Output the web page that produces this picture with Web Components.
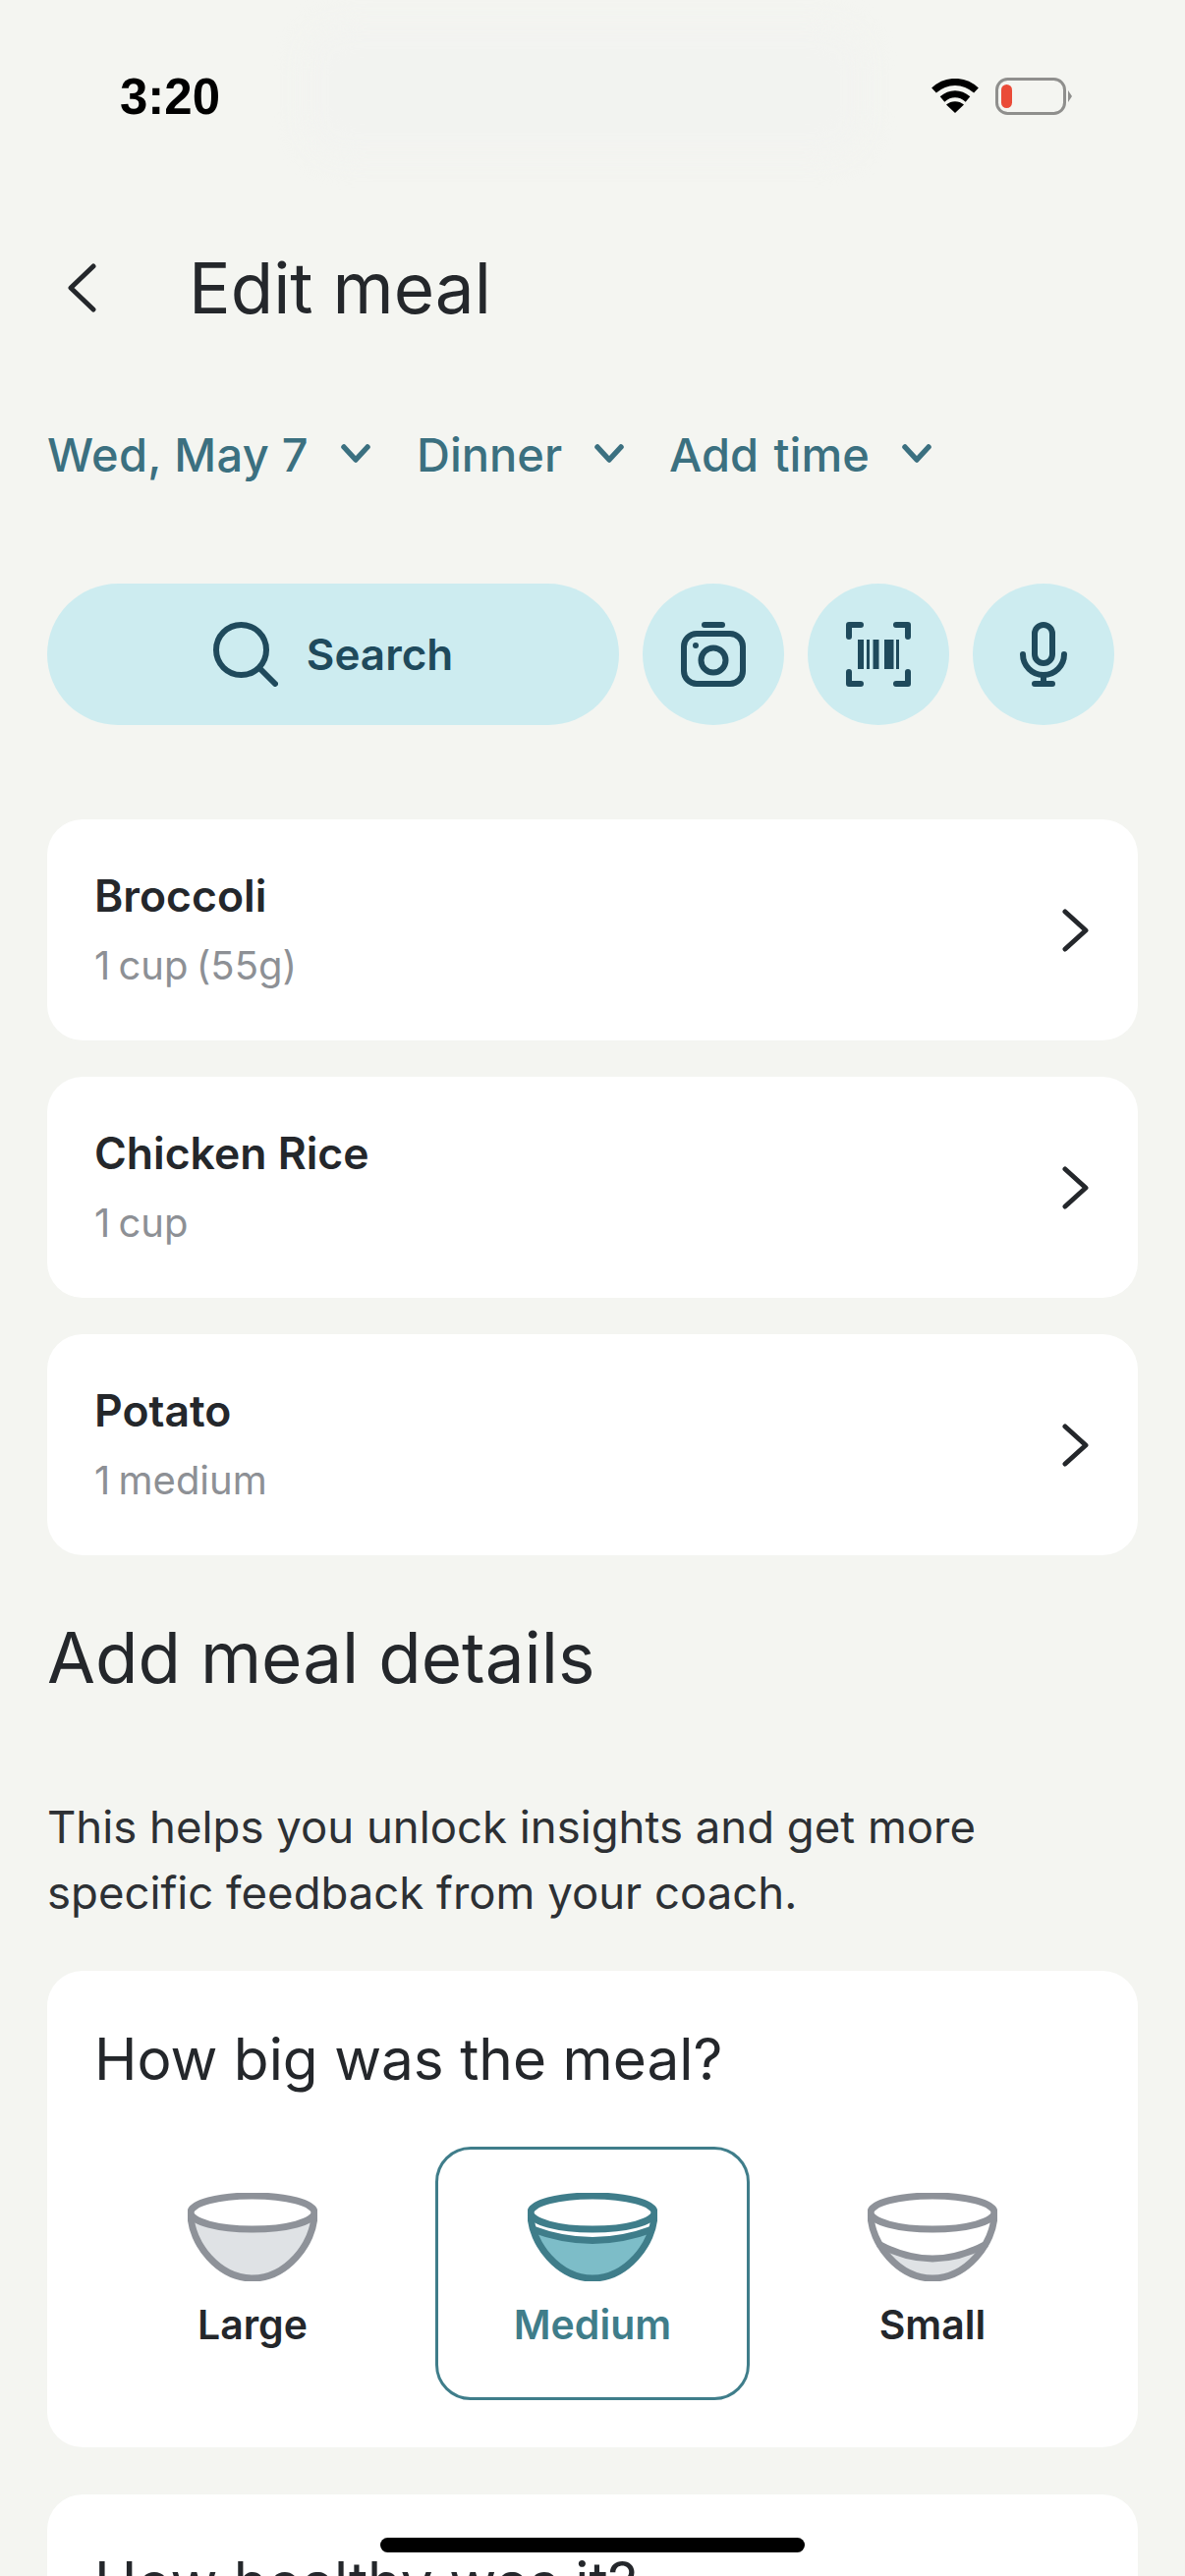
<!DOCTYPE html>
<html>
<head>
<meta charset="utf-8">
<title>Edit meal</title>
<style>
    html, body { margin: 0; height: 2622px; overflow: hidden; background: #f4f5f1; }
    body { font-family: 'Inter', 'Lato', sans-serif; color: #24272b; }
</style>
</head>
<body>
<meal-screen>
    <status-bar time="3:20"></status-bar>
    <nav-header>Edit meal</nav-header>
    <filter-row>
        <filter-chip style="width:376px;letter-spacing:.3px">Wed, May 7</filter-chip>
        <filter-chip style="width:257px">Dinner</filter-chip>
        <filter-chip style="word-spacing:3px">Add time</filter-chip>
    </filter-row>
    <action-row>
        <search-pill>Search</search-pill>
        <icon-circle icon="camera"></icon-circle>
        <icon-circle icon="barcode"></icon-circle>
        <icon-circle icon="mic"></icon-circle>
    </action-row>
    <food-list>
        <food-row name="Broccoli" amount="1 cup (55g)"></food-row>
        <food-row name="Chicken Rice" amount="1 cup"></food-row>
        <food-row name="Potato" amount="1 medium"></food-row>
    </food-list>
    <details-intro heading="Add meal details">This helps you unlock insights and get more specific feedback from your coach.</details-intro>
    <question-card heading="How big was the meal?">
        <size-option label="Large" level="large"></size-option>
        <size-option label="Medium" level="medium" selected></size-option>
        <size-option label="Small" level="small"></size-option>
    </question-card>
    <question-card class="next" heading="How healthy was it?"></question-card>
</meal-screen>
<home-bar></home-bar>

<script>
const ICONS = {
    camera: `<rect x="21" y="0" width="24" height="6" rx="3" fill="currentColor" stroke="none"/>
             <rect x="3" y="12" width="60" height="51" rx="13"/>
             <circle cx="33" cy="39" r="12.5"/>
             <circle cx="15" cy="24" r="3" fill="currentColor" stroke="none"/>`,
    barcode: `<path d="M15 3H3V15M51 3H63V15M3 51V63H15M63 51V63H51"/>
              <g fill="currentColor" stroke="none">
                <rect x="12" y="18" width="6" height="30"/><rect x="21" y="18" width="3" height="30"/>
                <rect x="27.5" y="18" width="6" height="30"/><rect x="39" y="18" width="9.5" height="30"/>
                <rect x="51" y="18" width="3" height="30"/>
              </g>`,
    mic: `<rect x="24" y="3" width="18" height="39" rx="9"/>
          <path d="M12 33A21 21 0 0 0 54 33M33 54V63M24 63H42"/>`
};

class MealScreen extends HTMLElement {
    constructor() {
        super();
        this.attachShadow({ mode: 'open' });
        this.shadowRoot.innerHTML = `
            <style>
                :host { display: flex; flex-direction: column; padding: 0 48px; height: 2622px; box-sizing: border-box; overflow: hidden; position: relative; }
                ::slotted(*) { flex: none; }
            </style>
            <slot></slot>`;
    }
}

class StatusBar extends HTMLElement {
    constructor() {
        super();
        this.attachShadow({ mode: 'open' });
        this.shadowRoot.innerHTML = `
            <style>
                :host { display: flex; align-items: center; justify-content: space-between; height: 196px; margin: 0 -48px; padding: 0 115px 0 122px; box-sizing: border-box; position: relative; }
                .time { font: 700 51px/1 'Liberation Sans', sans-serif; color: #000; position: relative; }
                .blur { position: absolute; left: 310px; top: 25px; width: 570px; height: 135px; border-radius: 40px; background: #f2f3f0; filter: blur(14px); }
                .icons { display: flex; align-items: center; gap: 17px; position: relative; }
                svg { display: block; }
            </style>
            <div class="blur"></div>
            <span class="time">${this.getAttribute('time')}</span>
            <div class="icons">
                <svg width="48" height="36" viewBox="0 0 48 36">
                    <path d="M2.500 12C15 0.500 33 0.500 45.500 12" fill="none" stroke="#000" stroke-width="7"/>
                    <path d="M11 21C19 14 29 14 37 21" fill="none" stroke="#000" stroke-width="7"/>
                    <path d="M15 26.500C20 22 28 22 33 26.500L24 35Z" fill="#000"/>
                </svg>
                <svg width="78" height="38" viewBox="0 0 78 38">
                    <rect x="1.500" y="1.500" width="69" height="35" rx="11" fill="none" stroke="#8f8f8d" stroke-width="3"/>
                    <rect x="6" y="7" width="11" height="24" rx="5.500" fill="#ea4b38"/>
                    <path d="M74 13L78 19L74 25Z" fill="#8f8f8d"/>
                </svg>
            </div>`;
    }
}

class NavHeader extends HTMLElement {
    constructor() {
        super();
        this.attachShadow({ mode: 'open' });
        this.shadowRoot.innerHTML = `
            <style>
                :host { display: flex; align-items: center; gap: 94px; height: 100px; padding-left: 20px; margin-top: 47px; font-size: 71px; font-weight: 400; color: #24272b; }
                svg { display: block; flex: none; }
            </style>
            <svg width="30" height="50" viewBox="0 0 30 50"><path d="M27 3L4 25L27 47" fill="none" stroke="#24272b" stroke-width="5" stroke-linecap="round" stroke-linejoin="round"/></svg>
            <slot></slot>`;
    }
}

class FilterRow extends HTMLElement {
    constructor() {
        super();
        this.attachShadow({ mode: 'open' });
        this.shadowRoot.innerHTML = `
            <style>:host { display: flex; align-items: center; height: 60px; margin-top: 89px; }</style>
            <slot></slot>`;
    }
}

class FilterChip extends HTMLElement {
    constructor() {
        super();
        this.attachShadow({ mode: 'open' });
        this.shadowRoot.innerHTML = `
            <style>
                :host { display: flex; align-items: center; gap: 33px; font-size: 47px; font-weight: 500; color: #3b7080; white-space: nowrap; box-sizing: border-box; }
                svg { display: block; flex: none; }
            </style>
            <slot></slot>
            <svg width="30" height="20" viewBox="0 0 30 20"><path d="M3 3L15 16L27 3" fill="none" stroke="#3b7080" stroke-width="5.500" stroke-linecap="round" stroke-linejoin="round"/></svg>`;
    }
}

class ActionRow extends HTMLElement {
    constructor() {
        super();
        this.attachShadow({ mode: 'open' });
        this.shadowRoot.innerHTML = `
            <style>:host { display: flex; gap: 24px; margin-top: 102px; }</style>
            <slot></slot>`;
    }
}

class SearchPill extends HTMLElement {
    constructor() {
        super();
        this.attachShadow({ mode: 'open' });
        this.shadowRoot.innerHTML = `
            <style>
                :host { display: flex; align-items: center; justify-content: center; gap: 29px; width: 582px; height: 144px; border-radius: 72px; background: #cdecf0; color: #1f4a5c; font-size: 44px; font-weight: 600; }
                svg { display: block; }
            </style>
            <svg width="66" height="66" viewBox="0 0 66 66" fill="none" stroke="currentColor" stroke-width="6" stroke-linecap="round">
                <circle cx="28.500" cy="28.500" r="25.500"/><path d="M47 47L63 63"/>
            </svg>
            <slot></slot>`;
    }
}

class IconCircle extends HTMLElement {
    constructor() {
        super();
        this.attachShadow({ mode: 'open' });
        this.shadowRoot.innerHTML = `
            <style>
                :host { display: flex; align-items: center; justify-content: center; width: 144px; height: 144px; border-radius: 50%; background: #cdecf0; color: #1f4a5c; }
                svg { display: block; }
            </style>
            <svg width="66" height="66" viewBox="0 0 66 66" fill="none" stroke="currentColor" stroke-width="6" stroke-linecap="round" stroke-linejoin="round">${ICONS[this.getAttribute('icon')]}</svg>`;
    }
}

class FoodList extends HTMLElement {
    constructor() {
        super();
        this.attachShadow({ mode: 'open' });
        this.shadowRoot.innerHTML = `
            <style>:host { display: flex; flex-direction: column; gap: 37px; margin-top: 96px; }</style>
            <slot></slot>`;
    }
}

class FoodRow extends HTMLElement {
    constructor() {
        super();
        this.attachShadow({ mode: 'open' });
        this.shadowRoot.innerHTML = `
            <style>
                :host { display: flex; align-items: center; justify-content: space-between; height: 225px; padding: 0 48px; box-sizing: border-box; border-radius: 36px; background: #fff; }
                .name { font-size: 44.500px; font-weight: 600; color: #24272b; line-height: 58px; }
                .amount { font-size: 40px; color: #8d9095; line-height: 54px; margin-top: 15px; word-spacing: -3px; }
                svg { display: block; flex: none; }
            </style>
            <div>
                <div class="name">${this.getAttribute('name')}</div>
                <div class="amount">${this.getAttribute('amount')}</div>
            </div>
            <svg width="30" height="44" viewBox="0 0 30 44"><path d="M4 3L25 22L4 41" fill="none" stroke="#24272b" stroke-width="5" stroke-linecap="round" stroke-linejoin="round"/></svg>`;
    }
}

class DetailsIntro extends HTMLElement {
    constructor() {
        super();
        this.attachShadow({ mode: 'open' });
        this.shadowRoot.innerHTML = `
            <style>
                :host { display: block; margin-top: 62px; margin-bottom: -2px; }
                h2 { margin: 0; font-size: 71px; font-weight: 400; line-height: 84px; color: #24272b; }
                p { margin: 97px 0 0; font-size: 45.500px; line-height: 67px; color: #2d3034; max-width: 1040px; }
            </style>
            <h2>${this.getAttribute('heading')}</h2>
            <p><slot></slot></p>`;
    }
}

class QuestionCard extends HTMLElement {
    constructor() {
        super();
        this.attachShadow({ mode: 'open' });
        this.shadowRoot.innerHTML = `
            <style>
                :host { display: block; margin-top: 48px; height: 485px; flex: none; border-radius: 36px; background: #fff; box-sizing: border-box; padding: 54px 48px 0; }
                h3 { margin: 0; font-size: 58.500px; font-weight: 400; line-height: 72px; color: #24272b; }
                .options { display: grid; grid-template-columns: 320px 320px 320px; column-gap: 26px; margin: 53px 0 0 1px; }
            </style>
            <h3>${this.getAttribute('heading')}</h3>
            <div class="options"><slot></slot></div>`;
    }
}

class SizeOption extends HTMLElement {
    constructor() {
        super();
        this.attachShadow({ mode: 'open' });
        const selected = this.hasAttribute('selected');
        const stroke = selected ? '#3f7d8a' : '#8e9299';
        const fill = selected ? '#7dbdc8' : '#dfe2e5';
        const levels = {
            large: { fill: 'M0 20H132V90H0Z', line: '' },
            medium: { fill: 'M0 37Q66 60 132 37V90H0Z', line: 'M5 37Q66 60 127 37' },
            small: { fill: 'M0 50Q66 84 132 50V90H0Z', line: 'M11 52Q66 82 121 52' }
        };
        const level = levels[this.getAttribute('level')];
        const body = 'M3 21C3 52 32 87 66 87C100 87 129 52 129 21';
        this.shadowRoot.innerHTML = `
            <style>
                :host { display: flex; flex-direction: column; align-items: center; height: 258px; box-sizing: border-box; padding-top: 44px; border-radius: 36px; border: 3px solid ${selected ? '#3f7d8a' : 'transparent'}; }
                svg { display: block; }
                span { margin-top: 18px; font-size: 41px; line-height: 52px; font-weight: 600; color: ${selected ? '#3f7d8a' : '#24272b'}; }
            </style>
            <svg width="132" height="90" viewBox="0 0 132 90">
                <clipPath id="inside"><path d="${body}Z"/></clipPath>
                <path d="${level.fill}" fill="${fill}" clip-path="url(#inside)"/>
                <g fill="none" stroke="${stroke}" stroke-width="7">
                    <path d="${body}"/>
                    <path d="${level.line}"/>
                    <ellipse cx="66" cy="20" rx="63" ry="17" fill="#fff"/>
                </g>
            </svg>
            <span>${this.getAttribute('label')}</span>`;
    }
}

class HomeBar extends HTMLElement {
    constructor() {
        super();
        this.attachShadow({ mode: 'open' });
        this.shadowRoot.innerHTML = `
            <style>
                :host { position: fixed; left: 387px; top: 2583px; width: 432px; height: 15px; border-radius: 8px; background: #000; z-index: 5; }
            </style>`;
    }
}

customElements.define('meal-screen', MealScreen);
customElements.define('status-bar', StatusBar);
customElements.define('nav-header', NavHeader);
customElements.define('filter-row', FilterRow);
customElements.define('filter-chip', FilterChip);
customElements.define('action-row', ActionRow);
customElements.define('search-pill', SearchPill);
customElements.define('icon-circle', IconCircle);
customElements.define('food-list', FoodList);
customElements.define('food-row', FoodRow);
customElements.define('details-intro', DetailsIntro);
customElements.define('question-card', QuestionCard);
customElements.define('size-option', SizeOption);
customElements.define('home-bar', HomeBar);
</script>
</body>
</html>
